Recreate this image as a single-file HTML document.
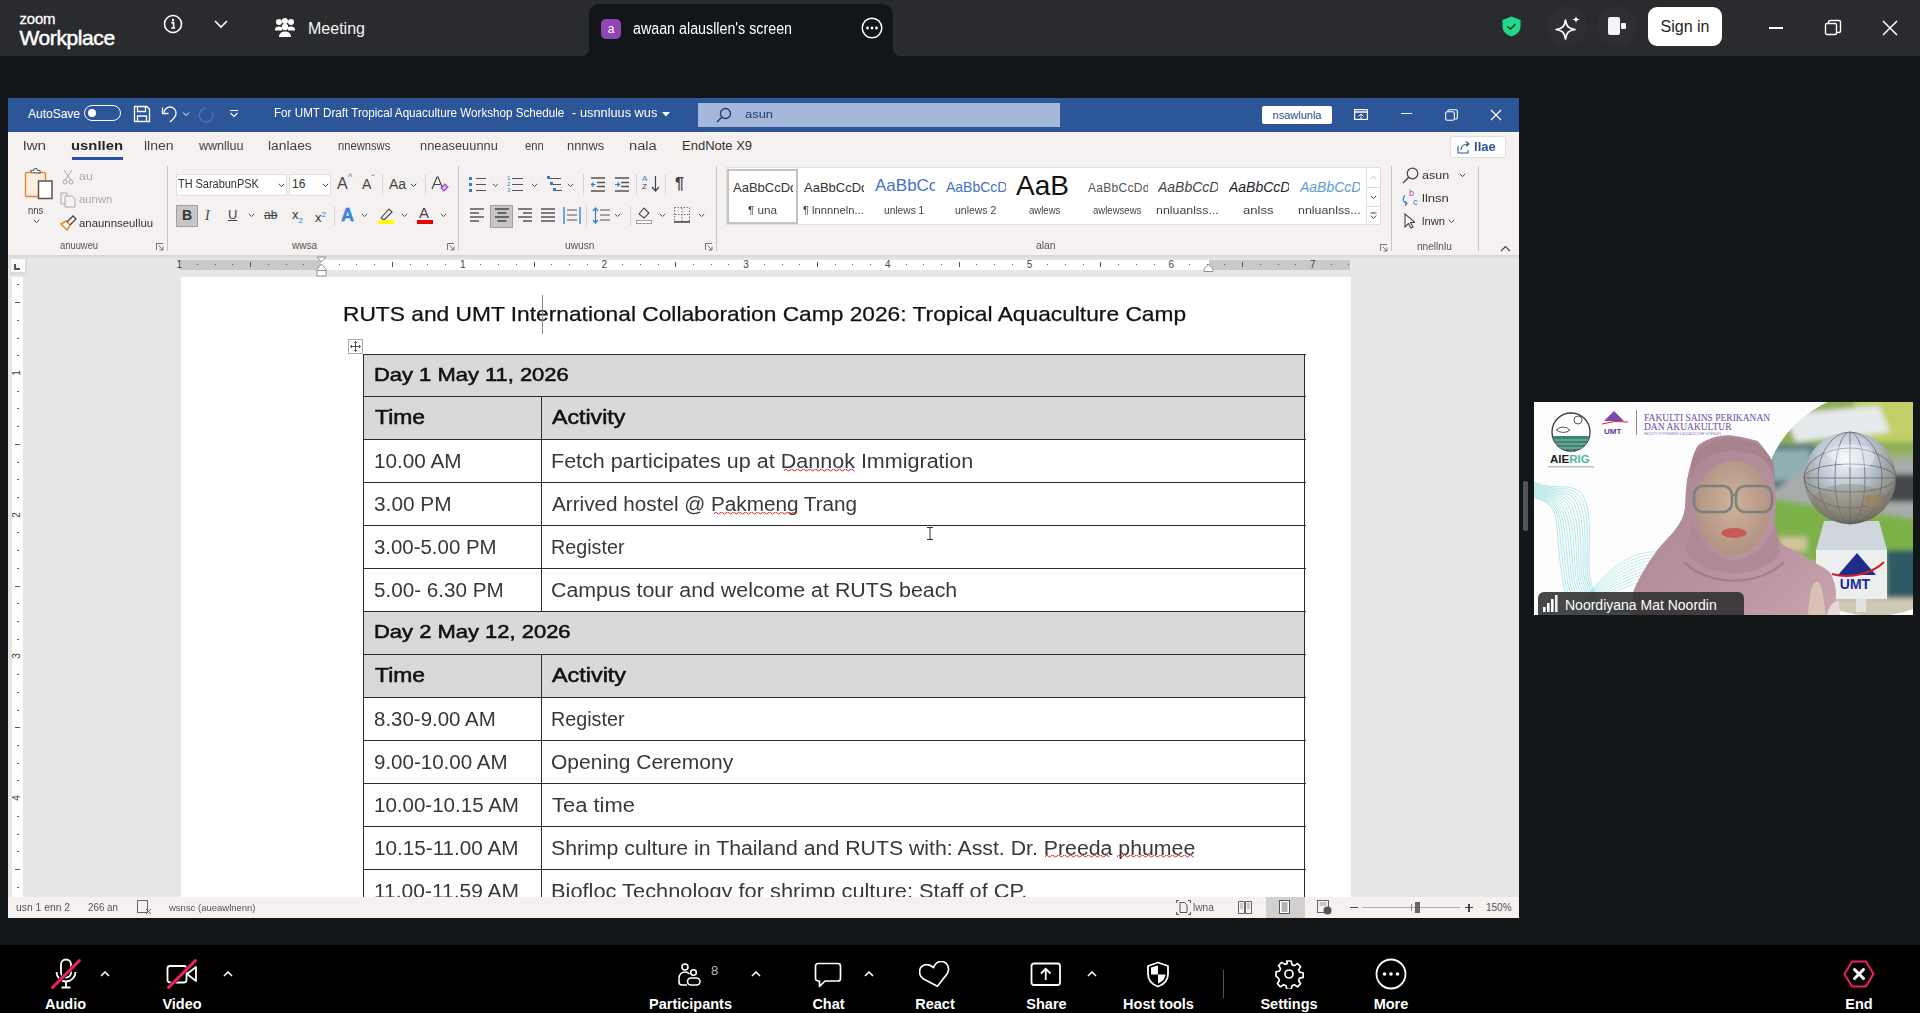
<!DOCTYPE html>
<html><head><meta charset="utf-8">
<style>
*{margin:0;padding:0;box-sizing:border-box}
html,body{width:1920px;height:1013px;overflow:hidden;background:#131619;font-family:"Liberation Sans",sans-serif}
.a{position:absolute}
.w{color:#fff}
/* zoom top bar */
#top{left:0;top:0;width:1920px;height:56px;background:#2a2b2e}
#tab{left:589px;top:4px;width:304px;height:52px;background:#131619;border-radius:10px 10px 0 0}
/* word */
#word{left:8px;top:98px;width:1511px;height:820px;background:#f4f1f0;overflow:hidden}
#tbar{left:0;top:0;width:1511px;height:34px;background:#2d5699}
#docbg{left:0;top:180px;width:1511px;height:618px;background:#e6e6e6}
#page{left:172px;top:180px;width:1170px;height:618px;background:#fff}
#status{left:0;top:798px;width:1511px;height:22px;background:#f4f1f0}
/* bottom */
#bot{left:0;top:945px;width:1920px;height:68px;background:#000}
.lbl{font-size:15px;font-weight:bold;color:#fff;text-align:center;width:120px}
</style></head><body>
<div id="top" class="a">
  <div class="a w" style="left:19.5px;top:11px;font-size:15px;letter-spacing:-0.2px;line-height:16px;-webkit-text-stroke:0.3px #fff">zoom</div>
  <div class="a w" style="left:19.5px;top:26px;font-size:21px;line-height:24px;letter-spacing:-0.4px;-webkit-text-stroke:0.5px #fff">Workplace</div>
  <svg class="a" style="left:163px;top:14px" width="20" height="20" viewBox="0 0 20 20"><circle cx="10" cy="10" r="8.5" fill="none" stroke="#fff" stroke-width="1.6"/><circle cx="10" cy="6" r="1.2" fill="#fff"/><path d="M8.3 8.6h2.3v5.4M8.2 14h4" stroke="#fff" stroke-width="1.6" fill="none"/></svg>
  <svg class="a" style="left:213px;top:19px" width="16" height="10" viewBox="0 0 16 10"><path d="M2 2l6 6 6-6" stroke="#fff" stroke-width="1.6" fill="none"/></svg>
  <svg class="a" style="left:274px;top:17px" width="22" height="22" viewBox="0 0 22 22"><circle cx="5" cy="5" r="3" fill="#fff"/><circle cx="11" cy="4" r="3" fill="#fff"/><circle cx="17" cy="5" r="3" fill="#fff"/><circle cx="11" cy="10" r="3.2" fill="#fff"/><path d="M1 12.5c0-2 1.5-3 4-3s3 1 3 1v3H1z" fill="#fff"/><path d="M21 12.5c0-2-1.5-3-4-3s-3 1-3 1v3h7z" fill="#fff"/><path d="M5 20c0-3.5 2.5-5.5 6-5.5s6 2 6 5.5z" fill="#fff"/></svg>
  <div class="a w" style="left:308px;top:20px;font-size:16px;line-height:18px;color:#f5f5f5">Meeting</div>
</div>
<div id="tab" class="a">
  <div class="a" style="left:-8px;bottom:0;width:8px;height:8px;background:radial-gradient(circle at 0 0,#2a2b2e 8px,#131619 8.5px)"></div>
  <div class="a" style="right:-8px;bottom:0;width:8px;height:8px;background:radial-gradient(circle at 100% 0,#2a2b2e 8px,#131619 8.5px)"></div>
  <div class="a" style="left:12px;top:15px;width:20px;height:20px;border-radius:5px;background:#9145b5;color:#fff;font-size:12px;line-height:20px;text-align:center">a</div>
  <div class="a" style="color:#fff;left:44.00px;top:15px;font-size:16px;line-height:20px;white-space:nowrap;white-space:nowrap;transform-origin:0 0;transform:scaleX(0.892)">awaan alausllen's screen</div>
  <svg class="a" style="left:272px;top:13px" width="22" height="22" viewBox="0 0 22 22"><circle cx="11" cy="11" r="9.8" fill="none" stroke="#fff" stroke-width="1.5"/><circle cx="6.5" cy="11" r="1.4" fill="#fff"/><circle cx="11" cy="11" r="1.4" fill="#fff"/><circle cx="15.5" cy="11" r="1.4" fill="#fff"/></svg>
</div>
<div class="a" style="left:0;top:0;width:1920px;height:56px">
  <svg class="a" style="left:1502px;top:16px" width="19" height="21" viewBox="0 0 19 21"><path d="M9.5 0.5L18.5 4v6.5c0 5-4 8.5-9 10-5-1.5-9-5-9-10V4z" fill="#1fd98b"/><path d="M5.5 10.5l2.8 2.8 5.2-5.3" stroke="#1b3a2a" stroke-width="1.5" fill="none"/></svg>
  <div class="a" style="left:1547px;top:6px;width:40px;height:40px;border-radius:50%;background:#2e2f33"></div>
  <svg class="a" style="left:1553px;top:13px" width="30" height="30" viewBox="0 0 30 30"><path d="M12.5 7C13.5 13.5,15.5 15.5,22 16.5C15.5 17.5,13.5 19.5,12.5 26C11.5 19.5,9.5 17.5,3 16.5C9.5 15.5,11.5 13.5,12.5 7Z" fill="none" stroke="#fff" stroke-width="1.7" stroke-linejoin="round"/><path d="M23 3C23.4 5.3,24.2 6.1,26.5 6.5C24.2 6.9,23.4 7.7,23 10C22.6 7.7,21.8 6.9,19.5 6.5C21.8 6.1,22.6 5.3,23 3Z" fill="#fff"/></svg>
  <div class="a" style="left:1597px;top:6px;width:40px;height:40px;border-radius:50%;background:#2e2f33"></div>
  <div class="a" style="left:1608px;top:17px;width:12px;height:18px;border-radius:2px;background:#f4f4f6"></div>
  <div class="a" style="left:1621px;top:23px;width:5px;height:6px;border-radius:1px;background:#f4f4f6"></div>
  <div class="a" style="left:1648px;top:7px;width:74px;height:39px;border-radius:9px;background:#fff;color:#1f1f1f;font-size:16px;line-height:39px;text-align:center">Sign in</div>
  <div class="a" style="left:1769px;top:27px;width:14px;height:1.5px;background:#fff"></div>
  <svg class="a" style="left:1824px;top:19px" width="18" height="18" viewBox="0 0 18 18"><rect x="1.5" y="4.5" width="11" height="11" rx="1.5" fill="none" stroke="#fff" stroke-width="1.4"/><path d="M4.5 4.5V3a1.5 1.5 0 0 1 1.5-1.5h9A1.5 1.5 0 0 1 16.5 3v9a1.5 1.5 0 0 1-1.5 1.5h-2.5" fill="none" stroke="#fff" stroke-width="1.4"/></svg>
  <svg class="a" style="left:1882px;top:20px" width="16" height="16" viewBox="0 0 16 16"><path d="M1 1l14 14M15 1L1 15" stroke="#fff" stroke-width="1.5"/></svg>
</div>
<div id="word" class="a">
  <div id="tbar" class="a">
    <div class="a w" style="left:20px;top:9px;font-size:12px;line-height:15px">AutoSave</div>
    <div class="a" style="left:76px;top:7px;width:37px;height:16px;border:1.3px solid #fff;border-radius:8px"></div>
    <div class="a" style="left:80px;top:11px;width:8px;height:8px;border-radius:50%;background:#fff"></div>
    <svg class="a" style="left:125px;top:7px" width="18" height="18" viewBox="0 0 18 18"><path d="M1.5 1.5h12.5l2.5 2.5v12.5h-15z" fill="none" stroke="#fff" stroke-width="1.3"/><path d="M4.5 1.5v5h8v-5M4.5 16.5v-5.5h9v5.5" fill="none" stroke="#fff" stroke-width="1.3"/></svg>
    <svg class="a" style="left:153px;top:7px" width="18" height="18" viewBox="0 0 18 18"><path d="M3 7.5A6 6 0 0 1 15 8.5c0 3-2 5-6 8.5" fill="none" stroke="#fff" stroke-width="1.3"/><path d="M1.5 2.5v6h6" fill="none" stroke="#fff" stroke-width="1.3"/></svg>
    <svg class="a" style="left:174px;top:13px" width="8" height="6" viewBox="0 0 8 6"><path d="M1 1.5l3 3 3-3" stroke="#fff" stroke-width="1" fill="none"/></svg>
    <svg class="a" style="left:190px;top:8px" width="18" height="18" viewBox="0 0 18 18"><path d="M14.5 6A7 7 0 1 1 8 2" fill="none" stroke="#4f73ae" stroke-width="1.3"/></svg>
    <svg class="a" style="left:221px;top:11px" width="10" height="10" viewBox="0 0 10 10"><path d="M1 1.5h8M1.5 4l3.5 3.5L8.5 4" stroke="#fff" stroke-width="1.1" fill="none"/></svg>
    <div class="a w" style="left:265.83px;top:8px;font-size:12px;line-height:15px;white-space:nowrap;transform-origin:0 0;transform:scaleX(0.971)">For UMT Draft Tropical Aquaculture Workshop Schedule</div><div class="a w" style="left:564px;top:8px;font-size:12px;line-height:15px">-</div><div class="a w" style="left:571.94px;top:8px;font-size:12px;line-height:15px;white-space:nowrap;transform-origin:0 0;transform:scaleX(1.063)">usnnluus wus</div>
    <svg class="a" style="left:654px;top:14px" width="8" height="5" viewBox="0 0 8 5"><path d="M0 0h8L4 4.5z" fill="#fff"/></svg>
    <div class="a" style="left:690px;top:5px;width:362px;height:24px;background:#a5b8d9"></div>
    <svg class="a" style="left:708px;top:9px" width="16" height="16" viewBox="0 0 16 16"><circle cx="9.5" cy="6.5" r="5" fill="none" stroke="#1f3d72" stroke-width="1.3"/><path d="M6 10L1 15" stroke="#1f3d72" stroke-width="1.4"/></svg>
    <div class="a" style="left:737.00px;top:9px;font-size:11.5px;line-height:15px;color:#1f3d72;white-space:nowrap;transform-origin:0 0;transform:scaleX(1.125)">asun</div>
    <div class="a" style="left:1254px;top:8px;width:70px;height:18px;background:#fff;border-radius:2px;color:#2b4f8a;font-size:11px;line-height:18px;text-align:center">nsawlunla</div>
    <svg class="a" style="left:1346px;top:11px" width="14" height="11" viewBox="0 0 14 11"><rect x="0.6" y="0.6" width="12.8" height="9.8" fill="none" stroke="#fff" stroke-width="1.2"/><path d="M0.6 3h12.8" stroke="#fff" stroke-width="1.5"/><path d="M4.5 7.5l2.5-2.5 2.5 2.5M7 5v5" stroke="#fff" stroke-width="1"/></svg>
    <div class="a" style="left:1393px;top:15px;width:11px;height:1.4px;background:#fff"></div>
    <svg class="a" style="left:1437px;top:11px" width="13" height="12" viewBox="0 0 13 12"><rect x="0.7" y="2.7" width="8.6" height="8.6" rx="1.5" fill="none" stroke="#fff" stroke-width="1.1"/><path d="M3 2.7V2A1.3 1.3 0 0 1 4.3 0.7h6.7A1.3 1.3 0 0 1 12.3 2v6.7A1.3 1.3 0 0 1 11 10h-1" fill="none" stroke="#fff" stroke-width="1.1"/></svg>
    <svg class="a" style="left:1482px;top:11px" width="12" height="12" viewBox="0 0 12 12"><path d="M1 1l10 10M11 1L1 11" stroke="#fff" stroke-width="1.2"/></svg>
  </div>
  <div class="a" style="left:14.76px;top:40px;font-size:12.5px;line-height:16px;color:#444;white-space:nowrap;white-space:nowrap;transform-origin:0 0;transform:scaleX(1.235)">lwn</div>
  <div class="a" style="left:63.41px;top:40px;font-size:12.5px;line-height:16px;color:#262626;font-weight:bold;white-space:nowrap;white-space:nowrap;transform-origin:0 0;transform:scaleX(1.188)">usnllen</div>
  <div class="a" style="left:64px;top:59px;width:51px;height:3px;background:#2b4fa3"></div>
  <div class="a" style="left:135.88px;top:40px;font-size:12.5px;line-height:16px;color:#444;white-space:nowrap;white-space:nowrap;transform-origin:0 0;transform:scaleX(1.120)">llnen</div>
  <div class="a" style="left:191.00px;top:40px;font-size:12.5px;line-height:16px;color:#444;white-space:nowrap;white-space:nowrap;transform-origin:0 0;transform:scaleX(1.000)">wwnlluu</div>
  <div class="a" style="left:259.89px;top:40px;font-size:12.5px;line-height:16px;color:#444;white-space:nowrap;white-space:nowrap;transform-origin:0 0;transform:scaleX(1.105)">lanlaes</div>
  <div class="a" style="left:330.11px;top:40px;font-size:12.5px;line-height:16px;color:#444;white-space:nowrap;white-space:nowrap;transform-origin:0 0;transform:scaleX(0.895)">nnewnsws</div>
  <div class="a" style="left:411.97px;top:40px;font-size:12.5px;line-height:16px;color:#444;white-space:nowrap;white-space:nowrap;transform-origin:0 0;transform:scaleX(1.027)">nneaseuunnu</div>
  <div class="a" style="left:517.00px;top:40px;font-size:12.5px;line-height:16px;color:#444;white-space:nowrap;white-space:nowrap;transform-origin:0 0;transform:scaleX(0.900)">enn</div>
  <div class="a" style="left:558.97px;top:40px;font-size:12.5px;line-height:16px;color:#444;white-space:nowrap;white-space:nowrap;transform-origin:0 0;transform:scaleX(1.029)">nnnws</div>
  <div class="a" style="left:620.83px;top:40px;font-size:12.5px;line-height:16px;color:#444;white-space:nowrap;white-space:nowrap;transform-origin:0 0;transform:scaleX(1.174)">nala</div>
  <div class="a" style="left:674px;top:40px;font-size:13px;line-height:16px;color:#333;white-space:nowrap">EndNote X9</div>
  <div class="a" style="left:1442px;top:38px;width:56px;height:22px;background:#fff;border:1px solid #e1dfdd;border-radius:3px"></div>
  <svg class="a" style="left:1449px;top:42px" width="14" height="14" viewBox="0 0 14 14"><path d="M1 6v7h10v-3" fill="none" stroke="#2b579a" stroke-width="1.1"/><path d="M4 10c0-4 3-6 7-6M9 1.5l3 2.5-3 2.5" fill="none" stroke="#2b579a" stroke-width="1.1"/></svg>
  <div class="a" style="left:1465.5px;top:41px;font-size:12.5px;line-height:16px;color:#2b579a;font-weight:bold;white-space:nowrap;transform-origin:0 0;transform:scaleX(1.050)">llae</div>
  <div id="docbg" class="a"></div>
  <div id="page" class="a"></div>
  <div id="status" class="a"></div>
</div>
<div id="rib" class="a" style="left:0;top:0;width:1920px;height:300px">
<svg class="a" style="left:24px;top:168px" width="30" height="32" viewBox="0 0 30 32"><rect x="1.5" y="4.5" width="20" height="24" rx="1" fill="#fbeee0" stroke="#e8862a" stroke-width="1.4"/><path d="M7 4.5V2.5h2.5a2 2 0 0 1 4 0H16v2.5z" fill="#fff" stroke="#666" stroke-width="1.2"/><rect x="14.5" y="13" width="13.5" height="17.5" fill="#fff" stroke="#555" stroke-width="1.5"/></svg>
<div class="a" style="left:28.00px;top:203px;font-size:11px;line-height:14px;color:#444;white-space:nowrap;white-space:nowrap;transform-origin:0 0;transform:scaleX(0.861)">nns</div>
<svg class="a" style="left:32.5px;top:219px" width="7" height="5" viewBox="0 0 7 5"><path d="M0.8 0.8L3.5 3.6 6.2 0.8" stroke="#555" stroke-width="1" fill="none"/></svg>
<svg class="a" style="left:62px;top:169px" width="12" height="16" viewBox="0 0 12 16"><path d="M2 1l7 10M10 1L3 11" stroke="#aaa" stroke-width="1"/><circle cx="3" cy="13" r="2" fill="none" stroke="#aaa"/><circle cx="9" cy="13" r="2" fill="none" stroke="#aaa"/></svg>
<div class="a" style="left:79.00px;top:169px;font-size:11px;line-height:14px;color:#aaa;white-space:nowrap;white-space:nowrap;transform-origin:0 0;transform:scaleX(1.133)">au</div>
<svg class="a" style="left:60px;top:192px" width="17" height="16" viewBox="0 0 17 16"><path d="M1 1h6v11H1z" fill="none" stroke="#aaa"/><path d="M5 4h7l3 3v8H5z" fill="#f3f2f1" stroke="#aaa"/></svg>
<div class="a" style="left:79.00px;top:192px;font-size:11px;line-height:14px;color:#aaa;white-space:nowrap;white-space:nowrap;transform-origin:0 0;transform:scaleX(1.031)">aunwn</div>
<svg class="a" style="left:60px;top:215px" width="17" height="16" viewBox="0 0 17 16"><path d="M1 9l6 6 3-5-4-4z" fill="#fff" stroke="#e8862a" stroke-width="1.5"/><path d="M7 7l6-6 3 3-6 6" fill="none" stroke="#444" stroke-width="1.3"/></svg>
<div class="a" style="left:79.00px;top:216px;font-size:11px;line-height:14px;color:#333;white-space:nowrap;white-space:nowrap;transform-origin:0 0;transform:scaleX(1.035)">anaunnseulluu</div>
<div class="a" style="left:60.00px;top:239px;font-size:10px;line-height:13px;color:#555;white-space:nowrap;white-space:nowrap;transform-origin:0 0;transform:scaleX(0.938)">anuuweu</div>
<svg class="a" style="left:156px;top:243px" width="8" height="8" viewBox="0 0 8 8"><path d="M0.5 7V0.5H7M2.5 2.5L7 7M7 3.5V7H3.5" stroke="#666" stroke-width="0.9" fill="none"/></svg>
<div class="a" style="left:167px;top:166px;width:1px;height:85px;background:#c8c6c4"></div>
<div class="a" style="left:176px;top:174px;width:111px;height:22px;background:#fff;border:1px solid #e1dfdd"></div>
<div class="a" style="left:178px;top:177px;font-size:12px;line-height:15px;color:#333;white-space:nowrap;transform-origin:0 0;transform:scaleX(0.91)">TH SarabunPSK</div>
<svg class="a" style="left:277.5px;top:183px" width="7" height="5" viewBox="0 0 7 5"><path d="M0.8 0.8L3.5 3.6 6.2 0.8" stroke="#444" stroke-width="1" fill="none"/></svg>
<div class="a" style="left:289px;top:174px;width:42px;height:22px;background:#fff;border:1px solid #e1dfdd"></div>
<div class="a" style="left:292px;top:177px;font-size:12px;line-height:15px;color:#333;white-space:nowrap;">16</div>
<svg class="a" style="left:321.5px;top:183px" width="7" height="5" viewBox="0 0 7 5"><path d="M0.8 0.8L3.5 3.6 6.2 0.8" stroke="#444" stroke-width="1" fill="none"/></svg>
<div class="a" style="left:337px;top:174px;font-size:16px;line-height:19px;color:#444;white-space:nowrap;">A</div>
<div class="a" style="left:348px;top:171px;font-size:9px;line-height:12px;color:#2f7fd2;white-space:nowrap;"><span style="font-size:9px;color:#2f7fd2">^</span></div>
<div class="a" style="left:362px;top:176px;font-size:14px;line-height:17px;color:#444;white-space:nowrap;">A</div>
<div class="a" style="left:371px;top:172px;font-size:11px;line-height:14px;color:#2f7fd2;white-space:nowrap;"><span style="color:#2f7fd2">ˇ</span></div>
<div class="a" style="left:382px;top:174px;width:1px;height:21px;background:#d6d4d2"></div>
<div class="a" style="left:389px;top:176px;font-size:14px;line-height:17px;color:#444;white-space:nowrap;">Aa</div>
<svg class="a" style="left:409.5px;top:183px" width="7" height="5" viewBox="0 0 7 5"><path d="M0.8 0.8L3.5 3.6 6.2 0.8" stroke="#444" stroke-width="1" fill="none"/></svg>
<div class="a" style="left:425px;top:174px;width:1px;height:21px;background:#d6d4d2"></div>
<svg class="a" style="left:431px;top:176px" width="18" height="16" viewBox="0 0 18 16"><path d="M1 13L6 1h1l4 10M3 8.5h6" stroke="#444" stroke-width="1.2" fill="none"/><path d="M10 12l4-4 3 3-4 4z" fill="#d9b6e8" stroke="#a040c0" stroke-width="1.1"/></svg>
<div class="a" style="left:176px;top:205px;width:22px;height:22px;background:#c8c6c4;border:1px solid #a19f9d"></div>
<div class="a" style="left:182px;top:207px;font-size:14px;line-height:17px;color:#333;white-space:nowrap;font-weight:bold">B</div>
<div class="a" style="left:205px;top:207px;font-size:14px;line-height:17px;color:#444;white-space:nowrap;font-style:italic;font-family:'Liberation Serif',serif">I</div>
<div class="a" style="left:228px;top:207px;font-size:13px;line-height:16px;color:#444;white-space:nowrap;text-decoration:underline">U</div>
<svg class="a" style="left:247.5px;top:213px" width="7" height="5" viewBox="0 0 7 5"><path d="M0.8 0.8L3.5 3.6 6.2 0.8" stroke="#555" stroke-width="1" fill="none"/></svg>
<div class="a" style="left:264px;top:208px;font-size:12px;line-height:15px;color:#444;white-space:nowrap;"><s>ab</s></div>
<div class="a" style="left:292px;top:207px;font-size:13px;line-height:16px;color:#333;white-space:nowrap;">x<sub style="font-size:8px;color:#2f7fd2">2</sub></div>
<div class="a" style="left:315px;top:207px;font-size:13px;line-height:16px;color:#333;white-space:nowrap;">x<sup style="font-size:8px;color:#2f7fd2">2</sup></div>
<div class="a" style="left:334px;top:206px;width:1px;height:20px;background:#d6d4d2"></div>
<div class="a" style="left:341px;top:205px;font-size:18px;line-height:21px;color:#2f7fd2;white-space:nowrap;font-weight:bold;color:#3b87d9;-webkit-text-stroke:0.3px #2a6fc0">A</div>
<svg class="a" style="left:360.5px;top:213px" width="7" height="5" viewBox="0 0 7 5"><path d="M0.8 0.8L3.5 3.6 6.2 0.8" stroke="#555" stroke-width="1" fill="none"/></svg>
<svg class="a" style="left:378px;top:206px" width="17" height="18" viewBox="0 0 17 18"><path d="M3 12l8-9 3 3-8 8z" fill="none" stroke="#444" stroke-width="1.1"/><rect x="0" y="14" width="16" height="4" fill="#ffff00"/></svg>
<svg class="a" style="left:400.5px;top:213px" width="7" height="5" viewBox="0 0 7 5"><path d="M0.8 0.8L3.5 3.6 6.2 0.8" stroke="#555" stroke-width="1" fill="none"/></svg>
<div class="a" style="left:419px;top:204px;font-size:15px;line-height:18px;color:#444;white-space:nowrap;">A</div>
<div class="a" style="left:417px;top:220px;width:16px;height:4px;background:#e60000"></div>
<svg class="a" style="left:439.5px;top:213px" width="7" height="5" viewBox="0 0 7 5"><path d="M0.8 0.8L3.5 3.6 6.2 0.8" stroke="#555" stroke-width="1" fill="none"/></svg>
<div class="a" style="left:292.00px;top:239px;font-size:10px;line-height:13px;color:#555;white-space:nowrap;white-space:nowrap;transform-origin:0 0;transform:scaleX(1.000)">wwsa</div>
<svg class="a" style="left:447px;top:243px" width="8" height="8" viewBox="0 0 8 8"><path d="M0.5 7V0.5H7M2.5 2.5L7 7M7 3.5V7H3.5" stroke="#666" stroke-width="0.9" fill="none"/></svg>
<div class="a" style="left:458px;top:166px;width:1px;height:85px;background:#c8c6c4"></div>
<svg class="a" style="left:469px;top:176px" width="5" height="16"><rect x="0" y="1" width="3" height="3" fill="#2f7fd2"/><rect x="0" y="7" width="3" height="3" fill="#2f7fd2"/><rect x="0" y="13" width="3" height="3" fill="#2f7fd2"/></svg>
<div class="a" style="left:476px;top:178px;width:10px;height:1.3px;background:#555"></div>
<div class="a" style="left:476px;top:184px;width:10px;height:1.3px;background:#555"></div>
<div class="a" style="left:476px;top:190px;width:10px;height:1.3px;background:#555"></div>
<svg class="a" style="left:491.5px;top:183px" width="7" height="5" viewBox="0 0 7 5"><path d="M0.8 0.8L3.5 3.6 6.2 0.8" stroke="#555" stroke-width="1" fill="none"/></svg>
<div class="a" style="left:507px;top:175px;font-size:6px;line-height:9px;color:#2f7fd2;white-space:nowrap;"><span style="font-size:6px;line-height:6px;display:block;color:#2f7fd2">1<br>2<br>3</span></div>
<div class="a" style="left:512px;top:178px;width:11px;height:1.3px;background:#555"></div>
<div class="a" style="left:512px;top:184px;width:11px;height:1.3px;background:#555"></div>
<div class="a" style="left:512px;top:190px;width:11px;height:1.3px;background:#555"></div>
<svg class="a" style="left:530.5px;top:183px" width="7" height="5" viewBox="0 0 7 5"><path d="M0.8 0.8L3.5 3.6 6.2 0.8" stroke="#555" stroke-width="1" fill="none"/></svg>
<div class="a" style="left:550px;top:178px;width:11px;height:1.3px;background:#555"></div>
<div class="a" style="left:553px;top:184px;width:8px;height:1.3px;background:#555"></div>
<div class="a" style="left:556px;top:190px;width:6px;height:1.3px;background:#555"></div>
<div class="a" style="left:547px;top:176px;width:3px;height:3px;background:#2f7fd2"></div><div class="a" style="left:550px;top:182px;width:3px;height:3px;background:#2f7fd2"></div><div class="a" style="left:553px;top:188px;width:3px;height:3px;background:#2f7fd2"></div>
<svg class="a" style="left:566.5px;top:183px" width="7" height="5" viewBox="0 0 7 5"><path d="M0.8 0.8L3.5 3.6 6.2 0.8" stroke="#555" stroke-width="1" fill="none"/></svg>
<div class="a" style="left:583px;top:174px;width:1px;height:21px;background:#d6d4d2"></div>
<svg class="a" style="left:590px;top:177px" width="16" height="15"><path d="M1 1h14M7 5.5h8M7 9.5h8M1 14h14" stroke="#555" stroke-width="1.3"/><path d="M5.5 7.5H1.5M3.5 5.5l-2 2 2 2" stroke="#2f7fd2" stroke-width="1.2" fill="none"/></svg>
<svg class="a" style="left:614px;top:177px" width="16" height="15"><path d="M1 1h14M7 5.5h8M7 9.5h8M1 14h14" stroke="#555" stroke-width="1.3"/><path d="M1 7.5h4.5M3.5 5.5l2 2-2 2" stroke="#2f7fd2" stroke-width="1.2" fill="none"/></svg>
<div class="a" style="left:636px;top:174px;width:1px;height:21px;background:#d6d4d2"></div>
<div class="a" style="left:642px;top:175px;font-size:8px;line-height:11px;color:#444;white-space:nowrap;"><span style="display:block;font-size:8px;line-height:8px"><span style="color:#2f7fd2">A</span><br>Z</span></div>
<svg class="a" style="left:651px;top:176px" width="9" height="17"><path d="M4.5 0v15M1 11l3.5 4 3.5-4" stroke="#444" stroke-width="1.2" fill="none"/></svg>
<div class="a" style="left:665px;top:174px;width:1px;height:21px;background:#d6d4d2"></div>
<div class="a" style="left:675px;top:174px;font-size:16px;line-height:19px;color:#444;white-space:nowrap;font-weight:bold">¶</div>
<svg class="a" style="left:469px;top:208px" width="16" height="15"><path d="M1 1h14M1 5h9M1 9h14M1 13h9" stroke="#555" stroke-width="1.3"/></svg>
<div class="a" style="left:490px;top:205px;width:23px;height:23px;background:#c8c6c4;border:1px solid #a19f9d"></div>
<svg class="a" style="left:494px;top:208px" width="16" height="15"><path d="M1 1h14M3.5 5h9M1 9h14M3.5 13h9" stroke="#444" stroke-width="1.3"/></svg>
<svg class="a" style="left:517px;top:208px" width="16" height="15"><path d="M1 1h14M6 5h9M1 9h14M6 13h9" stroke="#555" stroke-width="1.3"/></svg>
<svg class="a" style="left:540px;top:208px" width="16" height="15"><path d="M1 1h14M1 5h14M1 9h14M1 13h14" stroke="#555" stroke-width="1.3"/></svg>
<svg class="a" style="left:563px;top:207px" width="18" height="17"><path d="M1 0v17M17 0v17" stroke="#2f7fd2" stroke-width="1.3"/><path d="M4 3h10M4 8h10M4 13h10" stroke="#555" stroke-width="1.2"/></svg>
<div class="a" style="left:586px;top:206px;width:1px;height:20px;background:#d6d4d2"></div>
<svg class="a" style="left:592px;top:207px" width="18" height="17"><path d="M3.5 1v15M1 4l2.5-3 2.5 3M1 13l2.5 3 2.5-3" stroke="#2f7fd2" stroke-width="1.2" fill="none"/><path d="M8 3h10M8 8h10M8 13h10" stroke="#555" stroke-width="1.2"/></svg>
<svg class="a" style="left:613.5px;top:213px" width="7" height="5" viewBox="0 0 7 5"><path d="M0.8 0.8L3.5 3.6 6.2 0.8" stroke="#555" stroke-width="1" fill="none"/></svg>
<div class="a" style="left:630px;top:206px;width:1px;height:20px;background:#d6d4d2"></div>
<svg class="a" style="left:636px;top:206px" width="17" height="18"><path d="M3 8l5-6 5 5-5 5z" fill="none" stroke="#444" stroke-width="1.1"/><rect x="0.5" y="14.5" width="15" height="3" fill="#fff" stroke="#888" stroke-width="0.8"/></svg>
<svg class="a" style="left:658.5px;top:213px" width="7" height="5" viewBox="0 0 7 5"><path d="M0.8 0.8L3.5 3.6 6.2 0.8" stroke="#555" stroke-width="1" fill="none"/></svg>
<svg class="a" style="left:674px;top:207px" width="17" height="16"><rect x="0.5" y="0.5" width="15" height="14" fill="none" stroke="#777" stroke-width="1" stroke-dasharray="1.5 1.5"/><path d="M8 1v14M1 7.5h15" stroke="#777" stroke-width="1" stroke-dasharray="1.5 1.5"/><path d="M0 15h16" stroke="#444" stroke-width="1.5"/></svg>
<svg class="a" style="left:697.5px;top:213px" width="7" height="5" viewBox="0 0 7 5"><path d="M0.8 0.8L3.5 3.6 6.2 0.8" stroke="#555" stroke-width="1" fill="none"/></svg>
<div class="a" style="left:565.00px;top:239px;font-size:10px;line-height:13px;color:#555;white-space:nowrap;white-space:nowrap;transform-origin:0 0;transform:scaleX(1.018)">uwusn</div>
<svg class="a" style="left:705px;top:243px" width="8" height="8" viewBox="0 0 8 8"><path d="M0.5 7V0.5H7M2.5 2.5L7 7M7 3.5V7H3.5" stroke="#666" stroke-width="0.9" fill="none"/></svg>
<div class="a" style="left:716px;top:166px;width:1px;height:85px;background:#c8c6c4"></div>
<div class="a" style="left:726px;top:167px;width:641px;height:58px;background:#fff;border:1px solid #e1dfdd"></div>
<div class="a" style="left:727px;top:169px;width:71px;height:55px;border:2px solid #c5c3c1"></div>
<div class="a" style="left:733px;top:180.7px;width:60px;overflow:hidden;font-size:13px;line-height:13px;color:#333;white-space:nowrap;">AaBbCcDd</div>
<div class="a" style="left:748.30px;top:204px;font-size:10px;line-height:13px;color:#444;white-space:nowrap;white-space:nowrap;transform-origin:0 0;transform:scaleX(1.168)">¶ una</div>
<div class="a" style="left:804px;top:180.7px;width:60px;overflow:hidden;font-size:13px;line-height:13px;color:#333;white-space:nowrap;">AaBbCcDd</div>
<div class="a" style="left:803.00px;top:204px;font-size:10px;line-height:13px;color:#444;white-space:nowrap;white-space:nowrap;transform-origin:0 0;transform:scaleX(1.119)">¶ lnnnneln...</div>
<div class="a" style="left:875px;top:176.8px;width:60px;overflow:hidden;font-size:17px;line-height:17px;color:#4472c4;white-space:nowrap;">AaBbCc</div>
<div class="a" style="left:883.80px;top:204px;font-size:10px;line-height:13px;color:#444;white-space:nowrap;white-space:nowrap;transform-origin:0 0;transform:scaleX(1.021)">unlews 1</div>
<div class="a" style="left:946px;top:179.7px;width:60px;overflow:hidden;font-size:14px;line-height:14px;color:#4472c4;white-space:nowrap;">AaBbCcD</div>
<div class="a" style="left:954.60px;top:204px;font-size:10px;line-height:13px;color:#444;white-space:nowrap;white-space:nowrap;transform-origin:0 0;transform:scaleX(1.046)">unlews 2</div>
<div class="a" style="left:1016px;top:172.4px;width:60px;overflow:hidden;font-size:28px;font-weight:normal;line-height:28px;color:#111;white-space:nowrap;">AaB</div>
<div class="a" style="left:1029.00px;top:204px;font-size:10px;line-height:13px;color:#444;white-space:nowrap;white-space:nowrap;transform-origin:0 0;transform:scaleX(0.958)">awlews</div>
<div class="a" style="left:1088px;top:181.6px;width:60px;overflow:hidden;font-size:12px;line-height:12px;color:#555;white-space:nowrap;letter-spacing:0.3px">AaBbCcDd</div>
<div class="a" style="left:1092.50px;top:204px;font-size:10px;line-height:13px;color:#444;white-space:nowrap;white-space:nowrap;transform-origin:0 0;transform:scaleX(0.956)">awlewsews</div>
<div class="a" style="left:1158px;top:179.7px;width:60px;overflow:hidden;font-size:14px;line-height:14px;color:#444;white-space:nowrap;font-style:italic">AaBbCcD</div>
<div class="a" style="left:1156.00px;top:204px;font-size:10px;line-height:13px;color:#444;white-space:nowrap;white-space:nowrap;transform-origin:0 0;transform:scaleX(1.240)">nnluanlss...</div>
<div class="a" style="left:1229px;top:179.7px;width:60px;overflow:hidden;font-size:14px;line-height:14px;color:#222;white-space:nowrap;font-style:italic">AaBbCcD</div>
<div class="a" style="left:1243.40px;top:204px;font-size:10px;line-height:13px;color:#444;white-space:nowrap;white-space:nowrap;transform-origin:0 0;transform:scaleX(1.304)">anlss</div>
<div class="a" style="left:1300px;top:179.7px;width:60px;overflow:hidden;font-size:14px;line-height:14px;color:#5b9bd5;white-space:nowrap;font-style:italic">AaBbCcD</div>
<div class="a" style="left:1297.80px;top:204px;font-size:10px;line-height:13px;color:#444;white-space:nowrap;white-space:nowrap;transform-origin:0 0;transform:scaleX(1.238)">nnluanlss...</div>
<div class="a" style="left:1366px;top:167px;width:15px;height:58px;background:#fff;border:1px solid #e1dfdd"></div>
<div class="a" style="left:1366px;top:187px;width:15px;height:1px;background:#e1dfdd"></div><div class="a" style="left:1366px;top:206px;width:15px;height:1px;background:#e1dfdd"></div>
<svg class="a" style="left:1370px;top:175px" width="7" height="5"><path d="M0.8 4L3.5 1.2 6.2 4" stroke="#bbb" fill="none"/></svg>
<svg class="a" style="left:1369.5px;top:195px" width="7" height="5" viewBox="0 0 7 5"><path d="M0.8 0.8L3.5 3.6 6.2 0.8" stroke="#444" stroke-width="1" fill="none"/></svg>
<svg class="a" style="left:1370px;top:212px" width="7" height="8"><path d="M0.5 1h6M0.8 3.5L3.5 6.5 6.2 3.5" stroke="#444" fill="none"/></svg>
<div class="a" style="left:1036.00px;top:239px;font-size:10px;line-height:13px;color:#555;white-space:nowrap;white-space:nowrap;transform-origin:0 0;transform:scaleX(1.039)">alan</div>
<svg class="a" style="left:1380px;top:244px" width="8" height="8" viewBox="0 0 8 8"><path d="M0.5 7V0.5H7M2.5 2.5L7 7M7 3.5V7H3.5" stroke="#666" stroke-width="0.9" fill="none"/></svg>
<div class="a" style="left:1391px;top:166px;width:1px;height:85px;background:#c8c6c4"></div>
<svg class="a" style="left:1402px;top:167px" width="17" height="17"><circle cx="10.5" cy="6.5" r="5.3" fill="none" stroke="#444" stroke-width="1.2"/><path d="M6.8 10.2L1 16" stroke="#444" stroke-width="1.3"/></svg>
<div class="a" style="left:1421.60px;top:168px;font-size:11px;line-height:14px;color:#333;white-space:nowrap;white-space:nowrap;transform-origin:0 0;transform:scaleX(1.135)">asun</div>
<svg class="a" style="left:1458.5px;top:173px" width="7" height="5" viewBox="0 0 7 5"><path d="M0.8 0.8L3.5 3.6 6.2 0.8" stroke="#444" stroke-width="1" fill="none"/></svg>
<div class="a" style="left:1409px;top:189px;font-size:9px;line-height:9px;color:#b146c2">b</div><div class="a" style="left:1413px;top:198px;font-size:9px;line-height:9px;color:#2f7fd2">c</div><svg class="a" style="left:1402px;top:195px" width="10" height="11"><path d="M3 0.5C0 3 1 8 5 8.5M3 6.5l2 2-2 2" stroke="#2f7fd2" stroke-width="1.1" fill="none"/></svg>
<div class="a" style="left:1421.60px;top:191px;font-size:11px;line-height:14px;color:#333;white-space:nowrap;white-space:nowrap;transform-origin:0 0;transform:scaleX(1.186)">llnsn</div>
<svg class="a" style="left:1404px;top:213px" width="11" height="16"><path d="M1 1v13l3.5-3.5 2.5 4.5 2-1-2.5-4.5h4.5z" fill="#fff" stroke="#444" stroke-width="1.1"/></svg>
<div class="a" style="left:1421.60px;top:214px;font-size:11px;line-height:14px;color:#333;white-space:nowrap;white-space:nowrap;transform-origin:0 0;transform:scaleX(1.018)">lnwn</div>
<svg class="a" style="left:1447.5px;top:219px" width="7" height="5" viewBox="0 0 7 5"><path d="M0.8 0.8L3.5 3.6 6.2 0.8" stroke="#444" stroke-width="1" fill="none"/></svg>
<div class="a" style="left:1416.70px;top:240px;font-size:10px;line-height:13px;color:#555;white-space:nowrap;white-space:nowrap;transform-origin:0 0;transform:scaleX(1.009)">nnellnlu</div>
<div class="a" style="left:1478px;top:166px;width:1px;height:85px;background:#c8c6c4"></div>
<svg class="a" style="left:1500px;top:245px" width="11" height="7"><path d="M1 6l4.5-4.5L10 6" stroke="#444" stroke-width="1.1" fill="none"/></svg>
<div class="a" style="left:8px;top:255px;width:1511px;height:1px;background:#d8d6d4"></div>
</div>
<div id="doc" class="a" style="left:0;top:0;width:1920px;height:1013px">
<div class="a" style="left:8px;top:256px;width:1511px;height:641px;background:#e6e6e6"></div>
<div class="a" style="left:8px;top:256px;width:1511px;height:3px;background:linear-gradient(#d9d9d9,#e6e6e6)"></div>
<div class="a" style="left:10px;top:258px;width:17px;height:17px;background:#dcdcdc"></div>
<div class="a" style="left:11px;top:259px;width:14px;height:13px;background:#fafafa"></div>
<div class="a" style="left:14px;top:264px;width:2px;height:6px;background:#555"></div><div class="a" style="left:14px;top:268px;width:6px;height:2px;background:#555"></div>
<div class="a" style="left:179px;top:260px;width:1171px;height:10px;background:#fff"></div>
<div class="a" style="left:179px;top:260px;width:142px;height:10px;background:#c9c8cb"></div>
<div class="a" style="left:1209px;top:260px;width:141px;height:10px;background:#c9c8cb"></div>
<div class="a" style="left:176.3px;top:259px;width:6px;text-align:center;font-size:10px;line-height:12px;color:#444">1</div>
<div class="a" style="left:197.0px;top:264px;width:1px;height:1px;background:#666"></div>
<div class="a" style="left:214.7px;top:264px;width:1px;height:1px;background:#666"></div>
<div class="a" style="left:232.4px;top:264px;width:1px;height:1px;background:#666"></div>
<div class="a" style="left:250.2px;top:262px;width:1px;height:5px;background:#555"></div>
<div class="a" style="left:267.9px;top:264px;width:1px;height:1px;background:#666"></div>
<div class="a" style="left:285.6px;top:264px;width:1px;height:1px;background:#666"></div>
<div class="a" style="left:303.3px;top:264px;width:1px;height:1px;background:#666"></div>
<div class="a" style="left:338.7px;top:264px;width:1px;height:1px;background:#666"></div>
<div class="a" style="left:356.4px;top:264px;width:1px;height:1px;background:#666"></div>
<div class="a" style="left:374.1px;top:264px;width:1px;height:1px;background:#666"></div>
<div class="a" style="left:391.9px;top:262px;width:1px;height:5px;background:#555"></div>
<div class="a" style="left:409.6px;top:264px;width:1px;height:1px;background:#666"></div>
<div class="a" style="left:427.3px;top:264px;width:1px;height:1px;background:#666"></div>
<div class="a" style="left:445.0px;top:264px;width:1px;height:1px;background:#666"></div>
<div class="a" style="left:459.7px;top:259px;width:6px;text-align:center;font-size:10px;line-height:12px;color:#444">1</div>
<div class="a" style="left:480.4px;top:264px;width:1px;height:1px;background:#666"></div>
<div class="a" style="left:498.1px;top:264px;width:1px;height:1px;background:#666"></div>
<div class="a" style="left:515.8px;top:264px;width:1px;height:1px;background:#666"></div>
<div class="a" style="left:533.5px;top:262px;width:1px;height:5px;background:#555"></div>
<div class="a" style="left:551.3px;top:264px;width:1px;height:1px;background:#666"></div>
<div class="a" style="left:569.0px;top:264px;width:1px;height:1px;background:#666"></div>
<div class="a" style="left:586.7px;top:264px;width:1px;height:1px;background:#666"></div>
<div class="a" style="left:601.4px;top:259px;width:6px;text-align:center;font-size:10px;line-height:12px;color:#444">2</div>
<div class="a" style="left:622.1px;top:264px;width:1px;height:1px;background:#666"></div>
<div class="a" style="left:639.8px;top:264px;width:1px;height:1px;background:#666"></div>
<div class="a" style="left:657.5px;top:264px;width:1px;height:1px;background:#666"></div>
<div class="a" style="left:675.2px;top:262px;width:1px;height:5px;background:#555"></div>
<div class="a" style="left:693.0px;top:264px;width:1px;height:1px;background:#666"></div>
<div class="a" style="left:710.7px;top:264px;width:1px;height:1px;background:#666"></div>
<div class="a" style="left:728.4px;top:264px;width:1px;height:1px;background:#666"></div>
<div class="a" style="left:743.1px;top:259px;width:6px;text-align:center;font-size:10px;line-height:12px;color:#444">3</div>
<div class="a" style="left:763.8px;top:264px;width:1px;height:1px;background:#666"></div>
<div class="a" style="left:781.5px;top:264px;width:1px;height:1px;background:#666"></div>
<div class="a" style="left:799.2px;top:264px;width:1px;height:1px;background:#666"></div>
<div class="a" style="left:816.9px;top:262px;width:1px;height:5px;background:#555"></div>
<div class="a" style="left:834.7px;top:264px;width:1px;height:1px;background:#666"></div>
<div class="a" style="left:852.4px;top:264px;width:1px;height:1px;background:#666"></div>
<div class="a" style="left:870.1px;top:264px;width:1px;height:1px;background:#666"></div>
<div class="a" style="left:884.8px;top:259px;width:6px;text-align:center;font-size:10px;line-height:12px;color:#444">4</div>
<div class="a" style="left:905.5px;top:264px;width:1px;height:1px;background:#666"></div>
<div class="a" style="left:923.2px;top:264px;width:1px;height:1px;background:#666"></div>
<div class="a" style="left:940.9px;top:264px;width:1px;height:1px;background:#666"></div>
<div class="a" style="left:958.6px;top:262px;width:1px;height:5px;background:#555"></div>
<div class="a" style="left:976.4px;top:264px;width:1px;height:1px;background:#666"></div>
<div class="a" style="left:994.1px;top:264px;width:1px;height:1px;background:#666"></div>
<div class="a" style="left:1011.8px;top:264px;width:1px;height:1px;background:#666"></div>
<div class="a" style="left:1026.5px;top:259px;width:6px;text-align:center;font-size:10px;line-height:12px;color:#444">5</div>
<div class="a" style="left:1047.2px;top:264px;width:1px;height:1px;background:#666"></div>
<div class="a" style="left:1064.9px;top:264px;width:1px;height:1px;background:#666"></div>
<div class="a" style="left:1082.6px;top:264px;width:1px;height:1px;background:#666"></div>
<div class="a" style="left:1100.3px;top:262px;width:1px;height:5px;background:#555"></div>
<div class="a" style="left:1118.1px;top:264px;width:1px;height:1px;background:#666"></div>
<div class="a" style="left:1135.8px;top:264px;width:1px;height:1px;background:#666"></div>
<div class="a" style="left:1153.5px;top:264px;width:1px;height:1px;background:#666"></div>
<div class="a" style="left:1168.2px;top:259px;width:6px;text-align:center;font-size:10px;line-height:12px;color:#444">6</div>
<div class="a" style="left:1188.9px;top:264px;width:1px;height:1px;background:#666"></div>
<div class="a" style="left:1206.6px;top:264px;width:1px;height:1px;background:#666"></div>
<div class="a" style="left:1224.3px;top:264px;width:1px;height:1px;background:#666"></div>
<div class="a" style="left:1242.0px;top:262px;width:1px;height:5px;background:#555"></div>
<div class="a" style="left:1259.8px;top:264px;width:1px;height:1px;background:#666"></div>
<div class="a" style="left:1277.5px;top:264px;width:1px;height:1px;background:#666"></div>
<div class="a" style="left:1295.2px;top:264px;width:1px;height:1px;background:#666"></div>
<div class="a" style="left:1309.9px;top:259px;width:6px;text-align:center;font-size:10px;line-height:12px;color:#444">7</div>
<div class="a" style="left:1330.6px;top:264px;width:1px;height:1px;background:#666"></div>
<div class="a" style="left:1348.3px;top:264px;width:1px;height:1px;background:#666"></div>
<svg class="a" style="left:316px;top:256px" width="11" height="21" viewBox="0 0 11 21"><path d="M1 1h9L5.5 6z" fill="#fff" stroke="#777" stroke-width="0.8"/><path d="M5.5 8L1 13v7h9v-7z" fill="#fff" stroke="#777" stroke-width="0.8"/><path d="M1 14.5h9" stroke="#777" stroke-width="0.8"/></svg>
<svg class="a" style="left:1203px;top:263px" width="11" height="9" viewBox="0 0 11 9"><path d="M5.5 1L1 6v2.5h9V6z" fill="#fff" stroke="#777" stroke-width="0.8"/></svg>
<div class="a" style="left:12px;top:277px;width:11px;height:620px;background:#fff"></div>
<div class="a" style="left:17px;top:284.4px;width:2px;height:1px;background:#666"></div>
<div class="a" style="left:15px;top:302.1px;width:5px;height:1px;background:#555"></div>
<div class="a" style="left:17px;top:319.9px;width:2px;height:1px;background:#666"></div>
<div class="a" style="left:17px;top:337.6px;width:2px;height:1px;background:#666"></div>
<div class="a" style="left:17px;top:355.3px;width:2px;height:1px;background:#666"></div>
<div class="a" style="left:11px;top:367.0px;width:12px;height:12px;text-align:center;font-size:10px;line-height:12px;color:#444;transform:rotate(-90deg)">1</div>
<div class="a" style="left:17px;top:390.7px;width:2px;height:1px;background:#666"></div>
<div class="a" style="left:17px;top:408.4px;width:2px;height:1px;background:#666"></div>
<div class="a" style="left:17px;top:426.1px;width:2px;height:1px;background:#666"></div>
<div class="a" style="left:15px;top:443.9px;width:5px;height:1px;background:#555"></div>
<div class="a" style="left:17px;top:461.6px;width:2px;height:1px;background:#666"></div>
<div class="a" style="left:17px;top:479.3px;width:2px;height:1px;background:#666"></div>
<div class="a" style="left:17px;top:497.0px;width:2px;height:1px;background:#666"></div>
<div class="a" style="left:11px;top:508.7px;width:12px;height:12px;text-align:center;font-size:10px;line-height:12px;color:#444;transform:rotate(-90deg)">2</div>
<div class="a" style="left:17px;top:532.4px;width:2px;height:1px;background:#666"></div>
<div class="a" style="left:17px;top:550.1px;width:2px;height:1px;background:#666"></div>
<div class="a" style="left:17px;top:567.8px;width:2px;height:1px;background:#666"></div>
<div class="a" style="left:15px;top:585.5px;width:5px;height:1px;background:#555"></div>
<div class="a" style="left:17px;top:603.3px;width:2px;height:1px;background:#666"></div>
<div class="a" style="left:17px;top:621.0px;width:2px;height:1px;background:#666"></div>
<div class="a" style="left:17px;top:638.7px;width:2px;height:1px;background:#666"></div>
<div class="a" style="left:11px;top:650.4px;width:12px;height:12px;text-align:center;font-size:10px;line-height:12px;color:#444;transform:rotate(-90deg)">3</div>
<div class="a" style="left:17px;top:674.1px;width:2px;height:1px;background:#666"></div>
<div class="a" style="left:17px;top:691.8px;width:2px;height:1px;background:#666"></div>
<div class="a" style="left:17px;top:709.5px;width:2px;height:1px;background:#666"></div>
<div class="a" style="left:15px;top:727.2px;width:5px;height:1px;background:#555"></div>
<div class="a" style="left:17px;top:745.0px;width:2px;height:1px;background:#666"></div>
<div class="a" style="left:17px;top:762.7px;width:2px;height:1px;background:#666"></div>
<div class="a" style="left:17px;top:780.4px;width:2px;height:1px;background:#666"></div>
<div class="a" style="left:11px;top:792.1px;width:12px;height:12px;text-align:center;font-size:10px;line-height:12px;color:#444;transform:rotate(-90deg)">4</div>
<div class="a" style="left:17px;top:815.8px;width:2px;height:1px;background:#666"></div>
<div class="a" style="left:17px;top:833.5px;width:2px;height:1px;background:#666"></div>
<div class="a" style="left:17px;top:851.2px;width:2px;height:1px;background:#666"></div>
<div class="a" style="left:15px;top:869.0px;width:5px;height:1px;background:#555"></div>
<div class="a" style="left:17px;top:886.7px;width:2px;height:1px;background:#666"></div>
<div class="a" style="left:181px;top:277px;width:1170px;height:620px;background:#fff"></div>
</div>
<div id="stat" class="a" style="left:0;top:0;width:1920px;height:1013px">
<div class="a" style="left:8px;top:897px;width:1511px;height:21px;background:#f4f1f0"></div>
<div class="a" style="left:15.60px;top:901px;font-size:10px;line-height:13px;color:#555;white-space:nowrap;white-space:nowrap;transform-origin:0 0;transform:scaleX(1.035)">usn 1 enn 2</div>
<div class="a" style="left:88.40px;top:901px;font-size:10px;line-height:13px;color:#555;white-space:nowrap;white-space:nowrap;transform-origin:0 0;transform:scaleX(0.980)">266 an</div>
<svg class="a" style="left:137px;top:900px" width="15" height="15"><rect x="0.5" y="0.5" width="10" height="12" fill="none" stroke="#666"/><path d="M9 9l5 5M14 9l-5 5" stroke="#666"/></svg>
<div class="a" style="left:168.75px;top:901px;font-size:9.5px;line-height:13px;color:#555;white-space:nowrap;white-space:nowrap;transform-origin:0 0;transform:scaleX(0.999)">wsnsc (aueawlnenn)</div>
<svg class="a" style="left:1176px;top:900px" width="15" height="15"><path d="M0.5 3V0.5H3M12 0.5h2.5V3M14.5 12v2.5H12M3 14.5H0.5V12" stroke="#555" fill="none"/><path d="M4 2.5h4.5l2.5 2.5v7.5H4z" fill="none" stroke="#555"/></svg>
<div class="a" style="left:1192.80px;top:901px;font-size:10px;line-height:13px;color:#555;white-space:nowrap;white-space:nowrap;transform-origin:0 0;transform:scaleX(1.010)">lwna</div>
<svg class="a" style="left:1238px;top:901px" width="14" height="13"><path d="M0.5 0.5h6v12h-6zM7.5 0.5h6v12h-6z" fill="none" stroke="#666"/><path d="M2 3h3M2 5h3M2 7h3M9 3h3M9 5h3M9 7h3" stroke="#888" stroke-width="0.8"/></svg>
<div class="a" style="left:1266px;top:897px;width:39px;height:21px;background:#d2d0ce"></div>
<svg class="a" style="left:1279px;top:900px" width="11" height="14"><rect x="0.5" y="0.5" width="10" height="13" fill="#fff" stroke="#555"/><path d="M2.5 3h6M2.5 5h6M2.5 7h6M2.5 9h6M2.5 11h6" stroke="#555" stroke-width="0.9"/></svg>
<svg class="a" style="left:1317px;top:900px" width="15" height="15"><rect x="0.5" y="0.5" width="11" height="12" fill="none" stroke="#666"/><path d="M2.5 3h7M2.5 5h7" stroke="#888" stroke-width="0.8"/><circle cx="10.5" cy="10.5" r="4" fill="#555"/></svg>
<div class="a" style="left:1350px;top:907px;width:8px;height:1.2px;background:#444"></div>
<div class="a" style="left:1362px;top:907px;width:98px;height:1px;background:#b0aeac"></div>
<div class="a" style="left:1411px;top:904px;width:1px;height:7px;background:#888"></div>
<div class="a" style="left:1415px;top:902px;width:5px;height:11px;background:#666"></div>
<div class="a" style="left:1465px;top:907px;width:8px;height:1.2px;background:#444"></div><div class="a" style="left:1468.4px;top:903.5px;width:1.2px;height:8px;background:#444"></div>
<div class="a" style="left:1486px;top:901px;font-size:10px;line-height:13px;color:#555;white-space:nowrap;">150%</div>
</div>
<div class="a" style="left:1523px;top:481px;width:5px;height:50px;background:#555;border-radius:2px"></div>
<div id="tbl" class="a" style="left:0;top:0;width:1920px;height:1013px;overflow:hidden;clip-path:inset(277px 0 116px 0)">
<div class="a" style="left:363.5px;top:354px;width:941.0px;height:85.5px;background:#d9d9dc"></div>
<div class="a" style="left:363.5px;top:611.5px;width:941.0px;height:86.0px;background:#d9d9dc"></div>
<div class="a" style="left:363.5px;top:353.5px;width:942.0px;height:1.3px;background:#2b2b2b"></div>
<div class="a" style="left:363.5px;top:396.0px;width:942.0px;height:1.3px;background:#2b2b2b"></div>
<div class="a" style="left:363.5px;top:439.0px;width:942.0px;height:1.3px;background:#2b2b2b"></div>
<div class="a" style="left:363.5px;top:481.5px;width:942.0px;height:1.3px;background:#2b2b2b"></div>
<div class="a" style="left:363.5px;top:524.8px;width:942.0px;height:1.3px;background:#2b2b2b"></div>
<div class="a" style="left:363.5px;top:568.0px;width:942.0px;height:1.3px;background:#2b2b2b"></div>
<div class="a" style="left:363.5px;top:611.0px;width:942.0px;height:1.3px;background:#2b2b2b"></div>
<div class="a" style="left:363.5px;top:653.5px;width:942.0px;height:1.3px;background:#2b2b2b"></div>
<div class="a" style="left:363.5px;top:697.0px;width:942.0px;height:1.3px;background:#2b2b2b"></div>
<div class="a" style="left:363.5px;top:740.0px;width:942.0px;height:1.3px;background:#2b2b2b"></div>
<div class="a" style="left:363.5px;top:783.0px;width:942.0px;height:1.3px;background:#2b2b2b"></div>
<div class="a" style="left:363.5px;top:826.0px;width:942.0px;height:1.3px;background:#2b2b2b"></div>
<div class="a" style="left:363.5px;top:868.5px;width:942.0px;height:1.3px;background:#2b2b2b"></div>
<div class="a" style="left:363.0px;top:354px;width:1.3px;height:546px;background:#2b2b2b"></div>
<div class="a" style="left:1304.0px;top:354px;width:1.3px;height:546px;background:#2b2b2b"></div>
<div class="a" style="left:541.0px;top:396.5px;width:1.2px;height:215.0px;background:#2b2b2b"></div>
<div class="a" style="left:541.0px;top:654px;width:1.2px;height:246px;background:#2b2b2b"></div>
<div class="a" style="left:342.92px;top:303.22px;font-size:21px;line-height:21px;font-weight:normal;color:#111;-webkit-text-stroke:0.25px #111;white-space:nowrap;transform-origin:0 0;transform:scaleX(1.0834)">RUTS and UMT International Collaboration Camp 2026: Tropical Aquaculture Camp</div>
<div class="a" style="left:373.81px;top:365.74px;font-size:18.5px;line-height:18.5px;font-weight:normal;color:#111;-webkit-text-stroke:0.55px #111;white-space:nowrap;transform-origin:0 0;transform:scaleX(1.1859)">Day 1 May 11, 2026</div>
<div class="a" style="left:375.00px;top:407.47px;font-size:20px;line-height:20px;font-weight:normal;color:#111;-webkit-text-stroke:0.55px #111;white-space:nowrap;transform-origin:0 0;transform:scaleX(1.1442)">Time</div>
<div class="a" style="left:552.30px;top:407.47px;font-size:20px;line-height:20px;font-weight:normal;color:#111;-webkit-text-stroke:0.55px #111;white-space:nowrap;transform-origin:0 0;transform:scaleX(1.1571)">Activity</div>
<div class="a" style="left:373.96px;top:451.17px;font-size:20px;line-height:20px;font-weight:normal;color:#383838;white-space:nowrap;transform-origin:0 0;transform:scaleX(1.0361)">10.00 AM</div>
<div class="a" style="left:551.22px;top:451.17px;font-size:20px;line-height:20px;font-weight:normal;color:#383838;white-space:nowrap;transform-origin:0 0;transform:scaleX(1.0762)">Fetch participates up at Dannok Immigration</div>
<div class="a" style="left:373.96px;top:493.67px;font-size:20px;line-height:20px;font-weight:normal;color:#383838;white-space:nowrap;transform-origin:0 0;transform:scaleX(1.0417)">3.00 PM</div>
<div class="a" style="left:552.30px;top:493.67px;font-size:20px;line-height:20px;font-weight:normal;color:#383838;white-space:nowrap;transform-origin:0 0;transform:scaleX(1.0347)">Arrived hostel @ Pakmeng Trang</div>
<div class="a" style="left:373.98px;top:536.97px;font-size:20px;line-height:20px;font-weight:normal;color:#383838;white-space:nowrap;transform-origin:0 0;transform:scaleX(1.0203)">3.00-5.00 PM</div>
<div class="a" style="left:551.31px;top:536.97px;font-size:20px;line-height:20px;font-weight:normal;color:#383838;white-space:nowrap;transform-origin:0 0;transform:scaleX(0.9863)">Register</div>
<div class="a" style="left:373.97px;top:580.17px;font-size:20px;line-height:20px;font-weight:normal;color:#383838;white-space:nowrap;transform-origin:0 0;transform:scaleX(1.0325)">5.00- 6.30 PM</div>
<div class="a" style="left:551.23px;top:580.17px;font-size:20px;line-height:20px;font-weight:normal;color:#383838;white-space:nowrap;transform-origin:0 0;transform:scaleX(1.0685)">Campus tour and welcome at RUTS beach</div>
<div class="a" style="left:373.81px;top:623.24px;font-size:18.5px;line-height:18.5px;font-weight:normal;color:#111;-webkit-text-stroke:0.55px #111;white-space:nowrap;transform-origin:0 0;transform:scaleX(1.1872)">Day 2 May 12, 2026</div>
<div class="a" style="left:375.00px;top:664.97px;font-size:20px;line-height:20px;font-weight:normal;color:#111;-webkit-text-stroke:0.55px #111;white-space:nowrap;transform-origin:0 0;transform:scaleX(1.1442)">Time</div>
<div class="a" style="left:552.30px;top:664.97px;font-size:20px;line-height:20px;font-weight:normal;color:#111;-webkit-text-stroke:0.55px #111;white-space:nowrap;transform-origin:0 0;transform:scaleX(1.1683)">Activity</div>
<div class="a" style="left:373.98px;top:709.17px;font-size:20px;line-height:20px;font-weight:normal;color:#383838;white-space:nowrap;transform-origin:0 0;transform:scaleX(1.0229)">8.30-9.00 AM</div>
<div class="a" style="left:551.31px;top:709.17px;font-size:20px;line-height:20px;font-weight:normal;color:#383838;white-space:nowrap;transform-origin:0 0;transform:scaleX(0.9863)">Register</div>
<div class="a" style="left:373.97px;top:752.17px;font-size:20px;line-height:20px;font-weight:normal;color:#383838;white-space:nowrap;transform-origin:0 0;transform:scaleX(1.0264)">9.00-10.00 AM</div>
<div class="a" style="left:551.25px;top:752.17px;font-size:20px;line-height:20px;font-weight:normal;color:#383838;white-space:nowrap;transform-origin:0 0;transform:scaleX(1.0503)">Opening Ceremony</div>
<div class="a" style="left:373.97px;top:795.17px;font-size:20px;line-height:20px;font-weight:normal;color:#383838;white-space:nowrap;transform-origin:0 0;transform:scaleX(1.0264)">10.00-10.15 AM</div>
<div class="a" style="left:552.30px;top:795.17px;font-size:20px;line-height:20px;font-weight:normal;color:#383838;white-space:nowrap;transform-origin:0 0;transform:scaleX(1.0960)">Tea time</div>
<div class="a" style="left:373.97px;top:838.17px;font-size:20px;line-height:20px;font-weight:normal;color:#383838;white-space:nowrap;transform-origin:0 0;transform:scaleX(1.0338)">10.15-11.00 AM</div>
<div class="a" style="left:551.24px;top:838.17px;font-size:20px;line-height:20px;font-weight:normal;color:#383838;white-space:nowrap;transform-origin:0 0;transform:scaleX(1.0640)">Shrimp culture in Thailand and RUTS with: Asst. Dr. Preeda phumee</div>
<div class="a" style="left:373.95px;top:880.67px;font-size:20px;line-height:20px;font-weight:normal;color:#383838;white-space:nowrap;transform-origin:0 0;transform:scaleX(1.0489)">11.00-11.59 AM</div>
<div class="a" style="left:551.21px;top:880.67px;font-size:20px;line-height:20px;font-weight:normal;color:#383838;white-space:nowrap;transform-origin:0 0;transform:scaleX(1.0903)">Biofloc Technology for shrimp culture: Staff of CP.</div>
<svg class="a" style="left:784px;top:469px" width="73" height="3"><path d="M0 2 L1.5 0 L4.5 2 L7.5 0 L10.5 2 L13.5 0 L16.5 2 L19.5 0 L22.5 2 L25.5 0 L28.5 2 L31.5 0 L34.5 2 L37.5 0 L40.5 2 L43.5 0 L46.5 2 L49.5 0 L52.5 2 L55.5 0 L58.5 2 L61.5 0 L64.5 2 L67.5 0 L70.5 2" stroke="#e02020" stroke-width="1" fill="none"/></svg>
<svg class="a" style="left:714px;top:512px" width="86" height="3"><path d="M0 2 L1.5 0 L4.5 2 L7.5 0 L10.5 2 L13.5 0 L16.5 2 L19.5 0 L22.5 2 L25.5 0 L28.5 2 L31.5 0 L34.5 2 L37.5 0 L40.5 2 L43.5 0 L46.5 2 L49.5 0 L52.5 2 L55.5 0 L58.5 2 L61.5 0 L64.5 2 L67.5 0 L70.5 2 L73.5 0 L76.5 2 L79.5 0 L82.5 2" stroke="#e02020" stroke-width="1" fill="none"/></svg>
<svg class="a" style="left:1045px;top:855px" width="68" height="3"><path d="M0 2 L1.5 0 L4.5 2 L7.5 0 L10.5 2 L13.5 0 L16.5 2 L19.5 0 L22.5 2 L25.5 0 L28.5 2 L31.5 0 L34.5 2 L37.5 0 L40.5 2 L43.5 0 L46.5 2 L49.5 0 L52.5 2 L55.5 0 L58.5 2 L61.5 0 L64.5 2" stroke="#e02020" stroke-width="1" fill="none"/></svg>
<svg class="a" style="left:1117px;top:855px" width="80" height="3"><path d="M0 2 L1.5 0 L4.5 2 L7.5 0 L10.5 2 L13.5 0 L16.5 2 L19.5 0 L22.5 2 L25.5 0 L28.5 2 L31.5 0 L34.5 2 L37.5 0 L40.5 2 L43.5 0 L46.5 2 L49.5 0 L52.5 2 L55.5 0 L58.5 2 L61.5 0 L64.5 2 L67.5 0 L70.5 2 L73.5 0 L76.5 2" stroke="#e02020" stroke-width="1" fill="none"/></svg>
</div>
<div class="a" style="left:542px;top:295px;width:1px;height:39px;background:#888"></div>
<svg class="a" style="left:348px;top:339px" width="15" height="15" viewBox="0 0 15 15"><rect x="0.5" y="0.5" width="14" height="14" fill="#fff" stroke="#aaa"/><path d="M7.5 2.5v10M2.5 7.5h10M6 4l1.5-1.5L9 4M6 11l1.5 1.5L9 11M4 6L2.5 7.5 4 9M11 6l1.5 1.5L11 9" stroke="#444" stroke-width="0.9" fill="none"/></svg>
<svg class="a" style="left:926px;top:527px" width="8" height="13"><path d="M1 0.5h6M1 12.5h6M4 0.5v12" stroke="#333" stroke-width="1"/></svg>
<svg class="a" style="left:1534px;top:402px" width="379" height="213" viewBox="0 0 379 213">
<defs>
<clipPath id="cp"><circle cx="340" cy="102" r="112"/></clipPath>
<radialGradient id="gl" cx="0.45" cy="0.3" r="0.75"><stop offset="0" stop-color="#f2f6fa"/><stop offset="0.4" stop-color="#bcc8d4"/><stop offset="0.75" stop-color="#8e8c86"/><stop offset="1" stop-color="#5a5954"/></radialGradient>
<linearGradient id="hj" x1="0" y1="0" x2="1" y2="1"><stop offset="0" stop-color="#a98590"/><stop offset="0.6" stop-color="#b8929e"/><stop offset="1" stop-color="#c7a3ae"/></linearGradient>
<radialGradient id="fc" cx="0.5" cy="0.45" r="0.6"><stop offset="0" stop-color="#cfb39e"/><stop offset="1" stop-color="#ad907e"/></radialGradient>
<filter id="bl" x="-10%" y="-10%" width="120%" height="120%"><feGaussianBlur stdDeviation="2.5"/></filter>
</defs>
<rect width="379" height="213" fill="#fdfdfd"/>
<path d="M0 80.0 C 30 95.0, 60.0 60, 55.0 150.0 S 120 200.0, 185 205" stroke="#3cc4c4" stroke-width="0.5" fill="none" opacity="0.75"/>
<path d="M0 81.2 C 30 95.8, 56.8 64, 53.0 152.4 S 124 198.0, 185 205" stroke="#3cc4c4" stroke-width="0.5" fill="none" opacity="0.75"/>
<path d="M0 82.4 C 30 96.6, 53.6 68, 51.0 154.8 S 128 196.0, 185 205" stroke="#3cc4c4" stroke-width="0.5" fill="none" opacity="0.75"/>
<path d="M0 83.6 C 30 97.4, 50.4 72, 49.0 157.2 S 132 194.0, 185 205" stroke="#3cc4c4" stroke-width="0.5" fill="none" opacity="0.75"/>
<path d="M0 84.8 C 30 98.2, 47.2 76, 47.0 159.6 S 136 192.0, 185 205" stroke="#3cc4c4" stroke-width="0.5" fill="none" opacity="0.75"/>
<path d="M0 86.0 C 30 99.0, 44.0 80, 45.0 162.0 S 140 190.0, 185 205" stroke="#3cc4c4" stroke-width="0.5" fill="none" opacity="0.75"/>
<path d="M0 87.2 C 30 99.8, 40.8 84, 43.0 164.4 S 144 188.0, 185 205" stroke="#3cc4c4" stroke-width="0.5" fill="none" opacity="0.75"/>
<path d="M0 88.4 C 30 100.6, 37.599999999999994 88, 41.0 166.8 S 148 186.0, 185 205" stroke="#3cc4c4" stroke-width="0.5" fill="none" opacity="0.75"/>
<path d="M0 89.6 C 30 101.4, 34.4 92, 39.0 169.2 S 152 184.0, 185 205" stroke="#3cc4c4" stroke-width="0.5" fill="none" opacity="0.75"/>
<path d="M0 90.8 C 30 102.2, 31.2 96, 37.0 171.6 S 156 182.0, 185 205" stroke="#3cc4c4" stroke-width="0.5" fill="none" opacity="0.75"/>
<path d="M0 92.0 C 30 103.0, 28.0 100, 35.0 174.0 S 160 180.0, 185 205" stroke="#3cc4c4" stroke-width="0.5" fill="none" opacity="0.75"/>
<path d="M0 93.2 C 30 103.8, 24.799999999999997 104, 33.0 176.4 S 164 178.0, 185 205" stroke="#3cc4c4" stroke-width="0.5" fill="none" opacity="0.75"/>
<path d="M0 94.4 C 30 104.6, 21.599999999999994 108, 31.0 178.8 S 168 176.0, 185 205" stroke="#3cc4c4" stroke-width="0.5" fill="none" opacity="0.75"/>
<path d="M0 95.6 C 30 105.4, 18.4 112, 29.0 181.2 S 172 174.0, 185 205" stroke="#3cc4c4" stroke-width="0.5" fill="none" opacity="0.75"/>
<path d="M40 213.0 C 80 150, 130 120.0, 190 190.0" stroke="#3cc4c4" stroke-width="0.5" fill="none" opacity="0.6"/>
<path d="M40 212.0 C 80 155, 130 124.0, 190 188.5" stroke="#3cc4c4" stroke-width="0.5" fill="none" opacity="0.6"/>
<path d="M40 211.0 C 80 160, 130 128.0, 190 187.0" stroke="#3cc4c4" stroke-width="0.5" fill="none" opacity="0.6"/>
<path d="M40 210.0 C 80 165, 130 132.0, 190 185.5" stroke="#3cc4c4" stroke-width="0.5" fill="none" opacity="0.6"/>
<path d="M40 209.0 C 80 170, 130 136.0, 190 184.0" stroke="#3cc4c4" stroke-width="0.5" fill="none" opacity="0.6"/>
<path d="M40 208.0 C 80 175, 130 140.0, 190 182.5" stroke="#3cc4c4" stroke-width="0.5" fill="none" opacity="0.6"/>
<path d="M40 207.0 C 80 180, 130 144.0, 190 181.0" stroke="#3cc4c4" stroke-width="0.5" fill="none" opacity="0.6"/>
<path d="M40 206.0 C 80 185, 130 148.0, 190 179.5" stroke="#3cc4c4" stroke-width="0.5" fill="none" opacity="0.6"/>
<path d="M40 205.0 C 80 190, 130 152.0, 190 178.0" stroke="#3cc4c4" stroke-width="0.5" fill="none" opacity="0.6"/>
<path d="M40 204.0 C 80 195, 130 156.0, 190 176.5" stroke="#3cc4c4" stroke-width="0.5" fill="none" opacity="0.6"/>

<g clip-path="url(#cp)">
  <g filter="url(#bl)">
  <rect x="220" y="-20" width="170" height="240" fill="#9bb07a"/>
  <rect x="220" y="-10" width="170" height="60" fill="#8fb055"/>
  <rect x="320" y="-10" width="70" height="50" fill="#c2cf68"/>
  <polygon points="250,12 345,4 356,30 262,40" fill="#e6eaec"/>
  <rect x="232" y="42" width="50" height="45" fill="#5c7d84"/>
  <rect x="236" y="48" width="40" height="30" fill="#8fb0b3"/>
  <polygon points="280,58 390,58 390,122 230,98" fill="#a8acaa"/>
  <rect x="345" y="72" width="40" height="28" fill="#44474d"/>
  <polygon points="230,96 390,118 390,158 230,172" fill="#7db24a"/>
  <rect x="245" y="135" width="28" height="14" fill="#d2c49a"/>
  <rect x="262" y="160" width="30" height="12" fill="#c8bc98"/>
  <rect x="352" y="148" width="40" height="52" fill="#2f5a66"/>
  <rect x="220" y="196" width="170" height="30" fill="#cfc8b5"/>
</g>
  <polygon points="290,119 345,119 353,148 282,148" fill="#cfd6de"/>
  <rect x="282" y="148" width="71" height="49" fill="#eceef0"/>
  <polygon points="304,173 323,151 342,173" fill="#1e2d8c"/>
  <path d="M298 172 C 318 178, 340 170, 350 160" stroke="#d62020" stroke-width="2" fill="none"/>
  <text x="321" y="187" font-family="Liberation Sans" font-weight="bold" font-size="14" fill="#1e2d9c" text-anchor="middle">UMT</text>
  <circle cx="316" cy="76" r="46" fill="url(#gl)"/>
  <g stroke="#5d6168" stroke-width="0.9" fill="none" opacity="0.8">
   <ellipse cx="316" cy="76" rx="46" ry="14"/><ellipse cx="316" cy="76" rx="46" ry="30"/>
   <ellipse cx="316" cy="76" rx="15" ry="46"/><ellipse cx="316" cy="76" rx="32" ry="46"/>
   <path d="M316 30v92M270 76h92"/>
  </g>
  <path d="M330 95 q10 -5 18 2 q-4 10 -14 8z" fill="#a68a60" opacity="0.8"/>
  <ellipse cx="316" cy="100" rx="38" ry="18" fill="#8a7a5e" opacity="0.35"/><path d="M290 50 q20 -12 45 -5 q10 10 0 20 q-25 5 -45 -15z" fill="#ffffff" opacity="0.35"/>
  <rect x="322" y="190" width="10" height="20" fill="#e8f0f4" opacity="0.7"/>
</g>
<path d="M96 213 L99.7 188.7 C105 175,120 150,132.5 137.5 C145 125,150 115,151 104.7 C152 90,152 80,154 73.6 C157 60,160 48,165 42.6 C175 35,190 32,198 33.5 C210 35,220 38,223.8 39 C232 48,238 58,238.4 64.5 C241 80,242 95,242 101 C241 115,240 125,240 130 C245 140,250 145,256.7 146.7 C265 150,272 155,278.6 159.5 C288 165,295 168,297 172 C301 180,302 188,302 192 L300.5 213 Z" fill="url(#hj)"/>
<ellipse cx="199" cy="106" rx="37" ry="47" fill="url(#fc)"/>
<path d="M157 82 C158 57,180 49,199 49 C220 49,238 57,241 82 L240 64 C236 50,225 38,199 36 C180 36,163 45,158 60 Z" fill="#a8838f"/>
<path d="M158 118 C170 150,190 158,200 158 C215 158,232 148,242 120 L246 150 C230 178,170 178,152 150 Z" fill="#b08a96"/>
<path d="M150 160 C175 185,225 185,250 160" stroke="#9a7582" stroke-width="2" fill="none" opacity="0.7"/>
<g fill="none" stroke="#7d807c" stroke-width="2.6"><rect x="160" y="84" width="38" height="26" rx="9"/><rect x="202" y="84" width="36" height="26" rx="9"/><path d="M198 93h4"/></g>
<ellipse cx="200" cy="131" rx="12.5" ry="5" fill="#c85a55"/>
<path d="M274 213 C275 195,277 182,282 180 C287 178,289 190,290 200 L292 213 Z" fill="#d9c2b4"/>
<path d="M293 213 C295 203,300 198,305 200 L306 213 Z" fill="#e8d8d8"/>
<circle cx="37" cy="30" r="19" fill="#fff" stroke="#3a3a3a" stroke-width="1.3"/>
<path d="M18.5 34 A 19 19 0 0 0 55.5 34 Z" fill="#3f8577"/>
<path d="M20 38h34M22 42h30M25 46h24" stroke="#9fd0c3" stroke-width="0.8"/>
<path d="M22 28 q8 -6 14 0 q-6 5 -14 0z" fill="none" stroke="#444" stroke-width="0.9"/>
<circle cx="44" cy="18" r="4" fill="none" stroke="#444" stroke-width="0.9"/>
<text x="16" y="61" font-family="Liberation Sans" font-weight="bold" font-size="11.5" fill="#222">AIE<tspan fill="#4fb3a0">RIG</tspan></text>
<rect x="14" y="64" width="46" height="1.5" fill="#999" opacity="0.6"/>
<polygon points="70,19 80,9 90,19" fill="#7a4aa8"/>
<path d="M68 22 q12 -4 26 -2" stroke="#c22" stroke-width="1" fill="none"/>
<text x="70" y="32" font-family="Liberation Sans" font-weight="bold" font-size="8" fill="#5a3a98">UMT</text>
<rect x="102" y="8" width="0.8" height="25" fill="#7a5aa8"/>
<text x="110" y="19" font-family="Liberation Serif" font-size="9.5" fill="#6a4aa8">FAKULTI SAINS PERIKANAN</text>
<text x="110" y="28" font-family="Liberation Serif" font-size="9.5" fill="#6a4aa8">DAN AKUAKULTUR</text>
<text x="110" y="33" font-family="Liberation Sans" font-size="3" fill="#8a7ab8">FACULTY OF FISHERIES &amp; AQUACULTURE SCIENCES</text>
<path d="M4 213 V 196 a 6 6 0 0 1 6 -6 H 204 a 6 6 0 0 1 6 6 V 213 Z" fill="#2d2d2d" opacity="0.88"/>
<g fill="#fff"><rect x="9" y="205" width="2.6" height="5"/><rect x="13" y="201" width="2.6" height="9"/><rect x="17" y="197" width="2.6" height="13"/><rect x="21" y="193" width="2.6" height="17" opacity="0.9"/></g>
<text x="31" y="208" font-family="Liberation Sans" font-size="14" fill="#fff">Noordiyana Mat Noordin</text>
</svg>

<div id="bot" class="a">
</div>
<div class="a" style="left:0;top:0;width:1920px;height:1013px">
<svg class="a" style="left:50px;top:958px" width="32" height="32" viewBox="0 0 32 32"><rect x="11" y="1.5" width="10" height="18" rx="5" fill="none" stroke="#fff" stroke-width="1.8"/><path d="M6.5 14a9.5 9.5 0 0 0 19 0M16 23.5v6M11.5 29.5h9" fill="none" stroke="#fff" stroke-width="1.8"/><path d="M2.5 29.5L29.5 2.5" stroke="#000" stroke-width="4"/><path d="M2.5 29.5L29.5 2.5" stroke="#f51f5d" stroke-width="3" stroke-linecap="round"/></svg>
<svg class="a" style="left:100px;top:971px" width="10" height="6" viewBox="0 0 10 6"><path d="M1 5l4-4 4 4" stroke="#fff" stroke-width="1.6" fill="none"/></svg>
<div class="a" style="left:5.5px;top:996px;width:120px;text-align:center;font-size:14.5px;line-height:17px;font-weight:bold;color:#fff;white-space:nowrap">Audio</div>
<svg class="a" style="left:166px;top:958px" width="32" height="32" viewBox="0 0 32 32"><rect x="1.5" y="8" width="19" height="16.5" rx="2.5" fill="none" stroke="#fff" stroke-width="1.8"/><path d="M21 16l9-7v14z" fill="none" stroke="#fff" stroke-width="1.8" stroke-linejoin="round"/><path d="M2.5 29.5L29.5 2.5" stroke="#000" stroke-width="4"/><path d="M2.5 29.5L29.5 2.5" stroke="#f51f5d" stroke-width="3" stroke-linecap="round"/></svg>
<svg class="a" style="left:223px;top:971px" width="10" height="6" viewBox="0 0 10 6"><path d="M1 5l4-4 4 4" stroke="#fff" stroke-width="1.6" fill="none"/></svg>
<div class="a" style="left:122px;top:996px;width:120px;text-align:center;font-size:14.5px;line-height:17px;font-weight:bold;color:#fff;white-space:nowrap">Video</div>
<svg class="a" style="left:678px;top:963px" width="24" height="23" viewBox="0 0 24 23"><circle cx="7" cy="4" r="3" fill="none" stroke="#fff" stroke-width="1.6"/><path d="M1 15.5c0-4 2.5-6.5 6-6.5 2 0 3.5.8 4.5 2" fill="none" stroke="#fff" stroke-width="1.6"/><circle cx="15.5" cy="9.5" r="2.8" fill="none" stroke="#fff" stroke-width="1.6"/><rect x="9.5" y="15" width="12.5" height="7" rx="3.5" fill="none" stroke="#fff" stroke-width="1.6"/><path d="M1 15.5v3.5a3 3 0 0 0 3 3h5" fill="none" stroke="#fff" stroke-width="1.6"/></svg>
<div class="a" style="left:711px;top:963px;font-size:13px;line-height:15px;color:#b9b9b9">8</div>
<svg class="a" style="left:751px;top:971px" width="10" height="6" viewBox="0 0 10 6"><path d="M1 5l4-4 4 4" stroke="#fff" stroke-width="1.6" fill="none"/></svg>
<div class="a" style="left:630.5px;top:996px;width:120px;text-align:center;font-size:14.5px;line-height:17px;font-weight:bold;color:#fff;white-space:nowrap">Participants</div>
<svg class="a" style="left:814px;top:962px" width="28" height="27" viewBox="0 0 28 27"><path d="M4 1.5h20a2.5 2.5 0 0 1 2.5 2.5v12.5a2.5 2.5 0 0 1-2.5 2.5H11l-5.5 5.5V19H4a2.5 2.5 0 0 1-2.5-2.5V4A2.5 2.5 0 0 1 4 1.5z" fill="none" stroke="#fff" stroke-width="1.7" stroke-linejoin="round"/></svg>
<svg class="a" style="left:864px;top:971px" width="10" height="6" viewBox="0 0 10 6"><path d="M1 5l4-4 4 4" stroke="#fff" stroke-width="1.6" fill="none"/></svg>
<div class="a" style="left:768.5px;top:996px;width:120px;text-align:center;font-size:14.5px;line-height:17px;font-weight:bold;color:#fff;white-space:nowrap">Chat</div>
<svg class="a" style="left:919px;top:961px" width="32" height="27" viewBox="0 0 32 27"><path d="M16 25.5L4 15.5C-0.5 11 1 3 7.5 2c4-.5 6.5 1.5 8.5 4.5 2-3 4.5-5 8.5-4.5C31 3 32.5 11 28 15.5z" fill="none" stroke="#fff" stroke-width="1.7" stroke-linejoin="round" transform="rotate(-12 16 14)"/></svg>
<div class="a" style="left:875px;top:996px;width:120px;text-align:center;font-size:14.5px;line-height:17px;font-weight:bold;color:#fff;white-space:nowrap">React</div>
<svg class="a" style="left:1030px;top:962px" width="32" height="25" viewBox="0 0 32 25"><rect x="1.5" y="1.5" width="28.5" height="21.5" rx="2.5" fill="none" stroke="#fff" stroke-width="1.8"/><path d="M15.75 18V7M11 11.5l4.75-4.75 4.75 4.75" fill="none" stroke="#fff" stroke-width="1.8"/></svg>
<svg class="a" style="left:1087px;top:971px" width="10" height="6" viewBox="0 0 10 6"><path d="M1 5l4-4 4 4" stroke="#fff" stroke-width="1.6" fill="none"/></svg>
<div class="a" style="left:986.5px;top:996px;width:120px;text-align:center;font-size:14.5px;line-height:17px;font-weight:bold;color:#fff;white-space:nowrap">Share</div>
<svg class="a" style="left:1146px;top:961px" width="24" height="27" viewBox="0 0 24 27"><path d="M12 1.5l10 3.5v8c0 6.5-4.5 10.5-10 12.5C6.5 23.5 2 19.5 2 13V5z" fill="none" stroke="#fff" stroke-width="1.8" stroke-linejoin="round"/><path d="M12 4.5v9H5V6.5zM12 13.5h7.5c-.5 4.5-3.5 7.5-7.5 9z" fill="#fff"/></svg>
<div class="a" style="left:1098.5px;top:996px;width:120px;text-align:center;font-size:14.5px;line-height:17px;font-weight:bold;color:#fff;white-space:nowrap">Host tools</div>
<div class="a" style="left:1223px;top:970px;width:1px;height:28px;background:#555"></div>
<svg class="a" style="left:1274px;top:959px" width="30" height="30" viewBox="0 0 30 30"><path d="M12.8 2h4.4l.8 3.6 2.3 1 3.2-2 3.1 3.1-2 3.2 1 2.3 3.6.8v4.4l-3.6.8-1 2.3 2 3.2-3.1 3.1-3.2-2-2.3 1-.8 3.6h-4.4l-.8-3.6-2.3-1-3.2 2-3.1-3.1 2-3.2-1-2.3L2 17.2v-4.4l3.6-.8 1-2.3-2-3.2 3.1-3.1 3.2 2 2.3-1z" fill="none" stroke="#fff" stroke-width="1.7" stroke-linejoin="round"/><circle cx="15" cy="15" r="4" fill="none" stroke="#fff" stroke-width="1.7"/></svg>
<div class="a" style="left:1229px;top:996px;width:120px;text-align:center;font-size:14.5px;line-height:17px;font-weight:bold;color:#fff;white-space:nowrap">Settings</div>
<svg class="a" style="left:1375px;top:958px" width="32" height="32" viewBox="0 0 32 32"><circle cx="16" cy="16" r="14.5" fill="none" stroke="#fff" stroke-width="1.8"/><circle cx="9.5" cy="16" r="1.8" fill="#fff"/><circle cx="16" cy="16" r="1.8" fill="#fff"/><circle cx="22.5" cy="16" r="1.8" fill="#fff"/></svg>
<div class="a" style="left:1331px;top:996px;width:120px;text-align:center;font-size:14.5px;line-height:17px;font-weight:bold;color:#fff;white-space:nowrap">More</div>
<svg class="a" style="left:1843px;top:960px" width="32" height="28" viewBox="0 0 32 28"><path d="M9 1.5h14l7.5 12.5L23 26.5H9L1.5 14z" fill="none" stroke="#ee1f5c" stroke-width="2" stroke-linejoin="round"/><path d="M11.5 9.5l9 9M20.5 9.5l-9 9" stroke="#fff" stroke-width="3" stroke-linecap="round"/></svg>
<div class="a" style="left:1799px;top:996px;width:120px;text-align:center;font-size:14.5px;line-height:17px;font-weight:bold;color:#fff;white-space:nowrap">End</div>
</div>

</body></html>
